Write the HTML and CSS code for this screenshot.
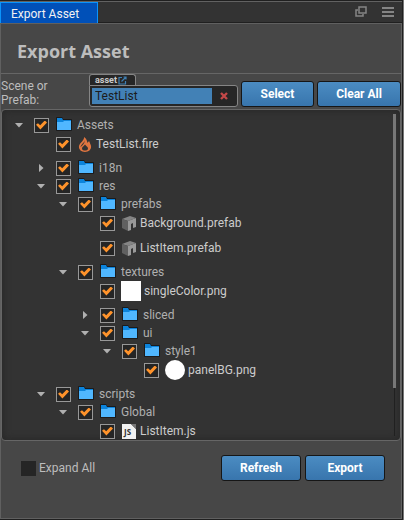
FILE: index.html
```html
<!DOCTYPE html>
<html lang="en">
<head>
<meta charset="utf-8">
<title>Export Asset</title>
<link rel="stylesheet" href="styles.css">
</head>
<body>
<svg class="defs" aria-hidden="true">
  <symbol id="folder" viewBox="0 0 16 14">
    <path d="M.5 .5V13.500H15.500V2.500H7L6 .500H.5z" fill="#1b1b1c" stroke="#1b1b1c"/>
    <path d="M1 1H6L7 3H15V6H1z" fill="#0c84dc"/>
    <path d="M1 5H7L8 4H15V13H1z" fill="#50b7ff"/>
  </symbol>
  <symbol id="fire" viewBox="0 0 14 16">
    <path d="M6 0C6.500 4 .5 6.500 .5 10.500C.5 13.500 3 16 7 16S13.500 13.500 13.500 10.500C13.500 8 12 6.500 11.500 4.500C10.500 5 10 5.500 9.500 6.500C9.300 4 8.500 1.500 6 0zM7 8C8 9.500 10.200 10.500 10.200 12.200C10.200 13.700 8.800 14.500 7 14.500S3.800 13.700 3.800 12.200C3.800 10.500 6 9.500 7 8z" fill="#df7540" fill-rule="evenodd"/>
    <path d="M6.800 3.500C6.500 6 2.500 8 2.300 10.800C4 9 6.500 7.500 6.800 3.500z" fill="#333"/>
  </symbol>
  <symbol id="prefab" viewBox="0 0 14 15">
    <path d="M0 3L8 0L14 2L6 5z" fill="#858585"/>
    <path d="M0 3L6 5V15L0 12z" fill="#606060"/>
    <path d="M6 5L14 2V11L11 12V7L9 8V14L6 15z" fill="#999"/>
  </symbol>
</svg>

<header class="tabbar">
  <button class="tab" type="button">Export Asset</button>
  <div class="tools">
    <button type="button" aria-label="Pop out"><svg width="12" height="12" viewBox="0 0 12 12" fill="none" stroke="#858585" stroke-width="1.500"><path d="M4 1H11V7H4z"/><path d="M3 4H1V10H8V8"/></svg></button>
    <button type="button" aria-label="Menu"><svg width="12" height="10" viewBox="0 0 12 10"><path d="M0 0H12V2H0zM0 4H12V6H0zM0 8H12V10H0z" fill="#858585"/></svg></button>
  </div>
</header>

<main class="panel">
  <h1>Export Asset</h1>
  <div class="picker">
    <label class="picker-label" for="asset">Scene or Prefab:</label>
    <div class="asset">
      <span class="asset-type">asset<svg width="9" height="9" viewBox="0 0 9 9" fill="none" stroke="#3f80b4" stroke-width="1.200"><path d="M4 1.500H1V8H7.500V5M5.500 1H8V3.500M8 1L3.500 5.500"/></svg></span>
      <div class="asset-field">
        <input id="asset" type="text" value="TestList" readonly>
        <button type="button" aria-label="Clear"><svg width="8" height="8" viewBox="0 0 8 8"><path d="M1 1L7 7M7 1L1 7" stroke="#c34848" stroke-width="2.400"/></svg></button>
      </div>
    </div>
    <button class="btn" type="button">Select</button>
    <button class="btn clear" type="button">Clear All</button>
  </div>

  <section class="tree-box">
    <ul class="tree">
      <li><div class="row"><button class="fold open" aria-label="Collapse"></button><label><input type="checkbox" checked><svg class="folder"><use href="#folder"/></svg>Assets</label></div>
        <ul>
          <li><div class="row file"><label><input type="checkbox" checked><svg class="icon"><use href="#fire"/></svg>TestList.fire</label></div></li>
          <li><div class="row"><button class="fold" aria-label="Expand"></button><label><input type="checkbox" checked><svg class="folder"><use href="#folder"/></svg>i18n</label></div></li>
          <li><div class="row"><button class="fold open" aria-label="Collapse"></button><label><input type="checkbox" checked><svg class="folder"><use href="#folder"/></svg>res</label></div>
            <ul>
              <li><div class="row"><button class="fold open" aria-label="Collapse"></button><label><input type="checkbox" checked><svg class="folder"><use href="#folder"/></svg>prefabs</label></div>
                <ul>
                  <li><div class="row file"><label><input type="checkbox" checked><svg class="icon"><use href="#prefab"/></svg>Background.prefab</label></div></li>
                  <li><div class="row file"><label><input type="checkbox" checked><svg class="icon"><use href="#prefab"/></svg>ListItem.prefab</label></div></li>
                </ul>
              </li>
              <li><div class="row"><button class="fold open" aria-label="Collapse"></button><label><input type="checkbox" checked><svg class="folder"><use href="#folder"/></svg>textures</label></div>
                <ul>
                  <li><div class="row file"><label><input type="checkbox" checked><span class="thumb"></span>singleColor.png</label></div></li>
                  <li><div class="row"><button class="fold" aria-label="Expand"></button><label><input type="checkbox" checked><svg class="folder"><use href="#folder"/></svg>sliced</label></div></li>
                  <li><div class="row"><button class="fold open" aria-label="Collapse"></button><label><input type="checkbox" checked><svg class="folder"><use href="#folder"/></svg>ui</label></div>
                    <ul>
                      <li><div class="row"><button class="fold open" aria-label="Collapse"></button><label><input type="checkbox" checked><svg class="folder"><use href="#folder"/></svg>style1</label></div>
                        <ul>
                          <li><div class="row file"><label><input type="checkbox" checked><span class="thumb round"></span>panelBG.png</label></div></li>
                        </ul>
                      </li>
                    </ul>
                  </li>
                </ul>
              </li>
            </ul>
          </li>
          <li><div class="row"><button class="fold open" aria-label="Collapse"></button><label><input type="checkbox" checked><svg class="folder"><use href="#folder"/></svg>scripts</label></div>
            <ul>
              <li><div class="row"><button class="fold open" aria-label="Collapse"></button><label><input type="checkbox" checked><svg class="folder"><use href="#folder"/></svg>Global</label></div>
                <ul>
                  <li><div class="row file"><label><input type="checkbox" checked><svg class="icon" viewBox="0 0 14 15"><path d="M0 0H9L14 5V15H0z" fill="#f1f1f1"/><path d="M9 0H14V5z" fill="#777"/><text x="2" y="11" class="script-mark">JS</text></svg>ListItem.js</label></div></li>
                </ul>
              </li>
            </ul>
          </li>
        </ul>
      </li>
    </ul>
    <div class="scroll"><span></span></div>
  </section>

  <footer>
    <label class="expand"><input type="checkbox">Expand All</label>
    <button class="btn" type="button">Refresh</button>
    <button class="btn" type="button">Export</button>
  </footer>
</main>
</body>
</html>
```
FILE: styles.css
```css
* { box-sizing: border-box; }

body {
  margin: 0;
  height: 100vh;
  display: flex;
  flex-direction: column;
  padding: 1px 1px 1px 0;
  background: #202020;
  border-right: 1px solid #777;
  color: #bdbdbd;
  font: 12px/18px Roboto, "Liberation Sans", sans-serif;
}

button, input { font: inherit; color: inherit; margin: 0; padding: 0; border: 0; }
button { background: none; }
svg { flex: none; display: block; }
.defs { position: absolute; width: 0; height: 0; }

.tabbar {
  flex: none;
  display: flex;
  justify-content: space-between;
  height: 22px;
  background: #333;
  border-top: 1px solid #626262;
  border-bottom: 1px solid #202020;
}

.tab {
  width: 98px;
  height: 22px;
  padding-left: 10px;
  background: #0050b8;
  border: 1px solid #0b94fb;
  border-bottom: 0;
  color: #f2f2f2;
  text-align: left;
}

.tools { display: flex; align-items: center; gap: 15px; padding-right: 8px; }

.panel {
  flex: 1;
  min-height: 0;
  display: flex;
  flex-direction: column;
  background: #474747;
  border: 1px solid #606060;
}

h1 {
  flex: none;
  margin: 0;
  height: 50px;
  padding: 13px 16px 0;
  border-bottom: 1px solid #666;
  font: bold 18px/28px "Open Sans", "Noto Sans", sans-serif;
}

.picker { flex: none; display: flex; align-items: flex-end; height: 35px; padding-bottom: 2px; }
.picker-label { width: 88px; padding-right: 30px; line-height: 14px; }

.asset { flex: 1; min-width: 0; }
.asset-type {
  display: flex;
  align-items: center;
  gap: 1px;
  width: 47px;
  height: 11px;
  padding-left: 5px;
  background: #262626;
  border: 1px solid #858585;
  border-bottom: 0;
  border-radius: 3px 3px 0 0;
  color: #ccc;
  font: bold 9px/10px Roboto, sans-serif;
}
.asset-field {
  display: flex;
  height: 22px;
  padding: 2px;
  background: #262626;
  border: 1px solid #858585;
  border-radius: 0 3px 3px 3px;
}
.asset-field input {
  flex: 1;
  min-width: 0;
  padding-left: 3px;
  background: #4281b6;
  color: #1c1c1c;
  font-size: 12px;
  outline: 0;
}
.asset-field button { display: grid; place-items: center; width: 23px; }

.btn {
  flex: none;
  width: 80px;
  height: 26px;
  background: linear-gradient(#4b8cc2, #3875ad);
  border: 1px solid #161616;
  border-radius: 3px;
  color: #fff;
  font-weight: bold;
}
.picker .btn { width: 73px; margin-left: 3px; }
.picker .clear { width: 84px; }

.tree-box {
  position: relative;
  flex: 1;
  min-height: 0;
  overflow: hidden;
  padding: 6px 6px 0;
  background: #333;
  border: 1px solid #666;
  border-radius: 4px;
  box-shadow: inset 0 0 8px #262626;
}

ul { list-style: none; margin: 0; padding: 0; }
ul ul { padding-left: 22px; }

.row { display: flex; align-items: center; height: 18px; color: #b0b0b0; }
.row label { display: flex; align-items: center; }
.file { height: 25px; padding: 0 0 5px 26px; color: #ccc; }

.fold { display: grid; place-items: center; width: 22px; height: 18px; margin-right: 4px; }
.fold::before { content: ""; width: 5px; height: 9px; background: #b0b0b0; clip-path: polygon(0 0, 100% 50%, 0 100%); }
.open::before { width: 9px; height: 5px; clip-path: polygon(0 0, 100% 0, 50% 100%); }

input[type="checkbox"] {
  appearance: none;
  flex: none;
  width: 15px;
  height: 15px;
  background: #252525;
}
input:checked { border: 1px solid #989898; }
input:checked::before {
  content: "";
  display: block;
  width: 11px;
  height: 9px;
  margin: 2px 1px;
  background: #ff932b;
  clip-path: polygon(0 48%, 18% 30%, 38% 54%, 80% 0, 100% 22%, 40% 100%);
}

.folder { width: 16px; height: 14px; margin: 0 5px 2px 7px; }
.icon { width: 14px; height: 15px; margin: 0 4px 0 7px; }
.thumb { width: 20px; height: 20px; margin: 0 3px 0 6px; background: #fff; }
.round { border-radius: 50%; }
.script-mark { font: bold 8px "Open Sans", sans-serif; fill: #333; }

.scroll { position: absolute; top: 4px; right: 4px; bottom: 4px; width: 3px; background: linear-gradient(#202020, #202020) center / 1px 100% no-repeat; }
.scroll span { display: block; height: 85%; background: #777; }

footer { flex: none; display: flex; gap: 4px; height: 77px; padding: 14px 16px 0 20px; }
.expand { display: flex; align-items: center; gap: 3px; height: 26px; margin-right: auto; }
```
